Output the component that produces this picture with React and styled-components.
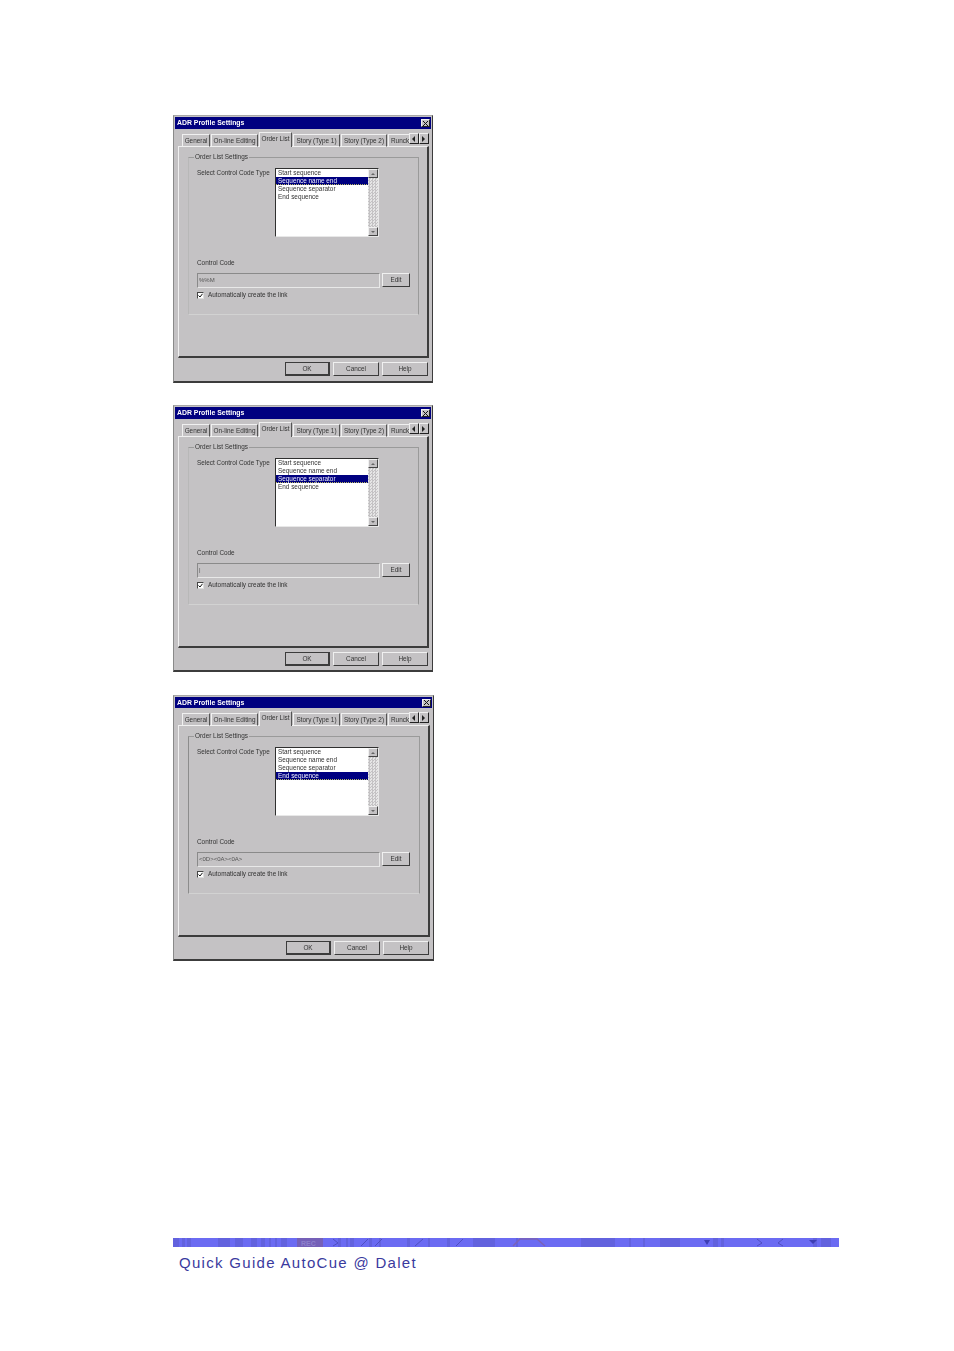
import React from "react";
import styled, { createGlobalStyle } from "styled-components";

const GlobalStyle = createGlobalStyle`
  html, body {
    margin: 0;
    padding: 0;
    background: #fff;
  }
  body {
    font-family: "Liberation Sans", Arial, sans-serif;
  }
`;

const Page = styled.div`
  width: 954px;
  height: 1351px;
  box-sizing: border-box;
  padding: 115px 0 0 173px;
  display: flex;
  flex-direction: column;
  overflow: hidden;
`;

const Shots = styled.div`
  display: flex;
  flex-direction: column;
  gap: 22px;
  height: 1123px;
`;

const Dialog = styled.div`
  box-sizing: border-box;
  width: ${(p) => (p.$wide ? 261 : 260)}px;
  height: ${(p) => p.$h}px;
  background: #c4c2c4;
  border: 1px solid #8a8a8a;
  border-right-color: #3c3c3c;
  border-bottom: 2px solid #3c3c3c;
  border-top-color: #a8a8a8;
  padding: 1px 1px 0 1px;
  display: flex;
  flex-direction: column;
  color: #333;
  font-size: 6.4px;
  line-height: 8px;
  filter: blur(0.3px);
  margin-top: ${(p) => p.$mt || 0}px;
`;

const TitleBar = styled.div`
  height: ${(p) => (p.$short ? 11 : 12)}px;
  flex: none;
  background: #000080;
  color: #fff;
  font-weight: 700;
  font-size: 6.9px;
  line-height: 12px;
  padding: 0 1px 0 2px;
  display: flex;
  align-items: center;
  justify-content: space-between;
`;

const CloseBtn = styled.span`
  width: 9px;
  height: 8px;
  background: #c4c2c4;
  border: 1px solid #eee;
  border-right-color: #222;
  border-bottom-color: #222;
  box-sizing: border-box;
  display: flex;
  align-items: center;
  justify-content: center;
  svg {
    display: block;
  }
`;

const TabRow = styled.div`
  flex: none;
  height: 18px;
  box-sizing: border-box;
  padding: 3px 0 0 7px;
  display: flex;
  align-items: flex-end;
  position: relative;
  z-index: 1;
  margin-bottom: -1px;
`;

const Tab = styled.div`
  box-sizing: border-box;
  width: ${(p) => p.$w}px;
  height: ${(p) => (p.$active ? 15 : 13)}px;
  margin-left: ${(p) => p.$ml ?? 1}px;
  background: #c4c2c4;
  border: 1px solid #f0f0f0;
  border-bottom: ${(p) => (p.$active ? "none" : "1px solid #f0f0f0")};
  border-right: 1px solid #555;
  text-align: center;
  white-space: nowrap;
  overflow: hidden;
  padding-top: 2px;
  ${(p) => p.$clip && "border-right: none; text-align: left; padding-left: 2px;"}
`;

const ScrollPair = styled.div`
  display: flex;
  align-self: flex-start;
  margin-top: 1px;
`;

const ArrowBtn = styled.span`
  width: 10px;
  height: 11px;
  box-sizing: border-box;
  background: #c4c2c4;
  border: 1px solid #f0f0f0;
  border-right-color: #222;
  border-bottom-color: #222;
  display: flex;
  align-items: center;
  justify-content: center;
`;

const Sheet = styled.div`
  flex: none;
  height: ${(p) => p.$h}px;
  margin: 0 2px 0 3px;
  box-sizing: border-box;
  border: 1px solid #f0f0f0;
  border-right: 2px solid #3c3c3c;
  border-bottom: 2px solid #3c3c3c;
  padding: 6px 8px 0 9px;
`;

const Group = styled.fieldset`
  margin: 0;
  height: 162px;
  box-sizing: border-box;
  min-width: 0;
  border: 1px solid #9a9a9a;
  border-left-color: ${(p) => (p.$dark ? "#8c8c8c" : "#b8b8b8")};
  border-bottom-color: #d2d2d2;
  padding: 8px 8px 0 8px;
`;

const Legend = styled.legend`
  padding: 0 1px;
  margin-left: -3px;
  height: 8px;
`;

const TypeRow = styled.div`
  display: flex;
  align-items: flex-start;
`;

const TypeLabel = styled.div`
  width: 78px;
  flex: none;
  white-space: nowrap;
`;

const ListBox = styled.div`
  width: 104px;
  height: 69px;
  box-sizing: border-box;
  background: #fff;
  border: 1px solid #303030;
  border-right-color: #e8e8e8;
  border-bottom-color: #e8e8e8;
  display: flex;
  margin-top: -1px;
`;

const Items = styled.div`
  flex: 1;
`;

const Item = styled.div`
  height: 8px;
  line-height: 8px;
  padding-left: 2px;
  white-space: nowrap;
  background-color: ${(p) => (p.$selected ? "#000080" : "transparent")};
  color: ${(p) => (p.$selected ? "#f0f0ff" : "#333")};
  ${(p) =>
    p.$selected &&
    `background-image: repeating-linear-gradient(90deg, #b8b860 0 1px, transparent 1px 2px);
     background-size: 100% 1px;
     background-position: 0 100%;
     background-repeat: no-repeat;`}
`;

const ScrollBar = styled.div`
  width: 10px;
  flex: none;
  display: flex;
  flex-direction: column;
  justify-content: space-between;
  background-color: #e6e6e6;
  background-image: conic-gradient(#c4c2c4 25%, transparent 0 50%, #c4c2c4 0 75%, transparent 0);
  background-size: 3px 3px;
`;

const ScrollBtn = styled.span`
  height: 9px;
  box-sizing: border-box;
  background: #c4c2c4;
  border: 1px solid #f0f0f0;
  border-right-color: #444;
  border-bottom-color: #444;
  display: flex;
  align-items: center;
  justify-content: center;
`;

const CodeLabel = styled.div`
  margin-top: 22px;
`;

const CodeRow = styled.div`
  display: flex;
  gap: 2px;
  margin-top: 6px;
`;

const CodeField = styled.div`
  width: 183px;
  height: 15px;
  box-sizing: border-box;
  background: #c4c2c4;
  border: 1px solid #8a8a8a;
  border-right-color: #e8e8e8;
  border-bottom-color: #e8e8e8;
  padding: 2px 0 0 1px;
  font-size: 6px;
  color: #555;
  white-space: nowrap;
`;

const PushBtn = styled.div`
  box-sizing: border-box;
  width: ${(p) => p.$w}px;
  height: ${(p) => p.$h || 14}px;
  background: #c4c2c4;
  border: 1px solid #f0f0f0;
  border-right-color: #3c3c3c;
  border-bottom-color: #3c3c3c;
  display: flex;
  align-items: center;
  justify-content: center;
  ${(p) => p.$default && "outline: 1px solid #3c3c3c; outline-offset: -1px; border-right-width: 2px; border-bottom-width: 2px;"}
`;

const CheckRow = styled.div`
  display: flex;
  align-items: center;
  gap: 4px;
  margin-top: 3px;
`;

const CheckBox = styled.span`
  width: 7px;
  height: 7px;
  box-sizing: border-box;
  background: #fff;
  border: 1px solid #444;
  border-right-color: #ddd;
  border-bottom-color: #ddd;
  display: flex;
  align-items: center;
  justify-content: center;
`;

const ButtonRow = styled.div`
  flex: none;
  display: flex;
  justify-content: flex-end;
  align-items: center;
  gap: 3px;
  padding: 4px 3px 0 0;
`;

const FootBar = styled.svg`
  display: block;
  width: 666px;
  height: 9px;
`;

const FootText = styled.div`
  margin: 7px 0 0 6px;
  color: #3a3a9e;
  font-size: 15px;
  line-height: 18px;
  letter-spacing: 1.3px;
  white-space: nowrap;
`;

const Tri = ({ dir, color = "#222" }) => {
  const pts = {
    left: "4,0 4,6 1,3",
    right: "1,0 1,6 4,3",
    up: "3,2 1,4 5,4",
    down: "1,2 5,2 3,4",
  };
  return (
    <svg width="6" height="6" viewBox="0 0 6 6">
      <polygon points={pts[dir]} fill={color} />
    </svg>
  );
};

const items = ["Start sequence", "Sequence name end", "Sequence separator", "End sequence"];

const tabs = [
  { label: "General", w: 28, ml: 0 },
  { label: "On-line Editing", w: 47 },
  { label: "Order List", w: 33, active: true },
  { label: "Story (Type 1)", w: 47 },
  { label: "Story (Type 2)", w: 46 },
];

const ProfileDialog = ({ selected, code, wide, h, sheetH, dark, mt, shortTitle }) => (
  <Dialog $wide={wide} $h={h} $mt={mt}>
    <TitleBar $short={shortTitle}>
      ADR Profile Settings
      <CloseBtn>
        <svg width="5" height="5" viewBox="0 0 5 5">
          <path d="M0 0L5 5M5 0L0 5" stroke="#111" strokeWidth="1" />
        </svg>
      </CloseBtn>
    </TitleBar>
    <TabRow>
      {tabs.map((t) => (
        <Tab key={t.label} $w={t.w} $ml={t.ml} $active={t.active}>
          {t.label}
        </Tab>
      ))}
      <Tab $w={21} $clip>
        Runck
      </Tab>
      <ScrollPair>
        <ArrowBtn>
          <Tri dir="left" />
        </ArrowBtn>
        <ArrowBtn>
          <Tri dir="right" />
        </ArrowBtn>
      </ScrollPair>
    </TabRow>
    <Sheet $h={sheetH}>
      <Group $dark={dark}>
        <Legend>Order List Settings</Legend>
        <TypeRow>
          <TypeLabel>Select Control Code Type</TypeLabel>
          <ListBox>
            <Items>
              {items.map((it, i) => (
                <Item key={it} $selected={i === selected}>
                  {it}
                </Item>
              ))}
            </Items>
            <ScrollBar>
              <ScrollBtn>
                <Tri dir="up" color="#666" />
              </ScrollBtn>
              <ScrollBtn>
                <Tri dir="down" color="#666" />
              </ScrollBtn>
            </ScrollBar>
          </ListBox>
        </TypeRow>
        <CodeLabel>Control Code</CodeLabel>
        <CodeRow>
          <CodeField>{code}</CodeField>
          <PushBtn $w={28}>Edit</PushBtn>
        </CodeRow>
        <CheckRow>
          <CheckBox>
            <svg width="5" height="5" viewBox="0 0 5 5">
              <path d="M0.5 2.5L2 4L4.5 0.8" stroke="#111" strokeWidth="1" fill="none" />
            </svg>
          </CheckBox>
          Automatically create the link
        </CheckRow>
      </Group>
    </Sheet>
    <ButtonRow>
      <PushBtn $w={45} $default>
        OK
      </PushBtn>
      <PushBtn $w={46}>Cancel</PushBtn>
      <PushBtn $w={46}>Help</PushBtn>
    </ButtonRow>
  </Dialog>
);

// darker marks on the strip, [x, width]
const stripMarks = [
  [0, 6], [9, 3], [14, 4], [45, 12], [62, 8], [78, 6], [88, 4], [96, 2], [102, 2], [108, 6],
  [165, 3], [173, 2], [177, 4], [196, 3], [206, 2], [234, 3], [255, 2], [274, 3],
  [300, 22], [343, 2], [408, 26], [434, 8], [456, 2], [470, 2], [487, 18], [505, 2], [540, 5],
  [548, 3], [640, 4], [648, 10],
];

const Strip = () => (
  <FootBar viewBox="0 0 666 9">
    <rect width="666" height="9" fill="#6b6bf2" />
    {stripMarks.map(([x, w]) => (
      <rect key={x} x={x} y="0" width={w} height="9" fill="#5c5cd0" opacity="0.6" />
    ))}
    <rect x="124" y="0" width="26" height="9" fill="#7560b8" />
    <text x="128" y="7.5" fontSize="7" fontWeight="700" fill="#8d80cc">REC</text>
    <path d="M340 8 L347 1 H364 L372 8" fill="none" stroke="#7a62b8" strokeWidth="1.5" />
    <path d="M160 1 L165 5 L160 8 M195 1 L188 8 M209 1 L202 8 M250 1 L242 8 M290 1 L283 8" stroke="#4f4fc0" fill="none" />
    <path d="M531 2 H537 L534 7 Z M636 2 L640 6 L644 2 Z" fill="#3e3eb4" />
    <path d="M584 1 L589 5 L584 8 M610 1 L605 5 L610 8" stroke="#4f4fc0" fill="none" />
  </FootBar>
);

export default function App() {
  return (
    <>
      <GlobalStyle />
      <Page>
        <Shots>
          <ProfileDialog selected={1} code="%%M" h={268} sheetH={212} />
          <ProfileDialog selected={2} code="|" h={267} sheetH={212} />
          <ProfileDialog selected={3} code="<0D><0A><0A>" h={266} sheetH={212} wide dark mt={1} shortTitle />
        </Shots>
        <Strip />
        <FootText>Quick Guide AutoCue @ Dalet</FootText>
      </Page>
    </>
  );
}
